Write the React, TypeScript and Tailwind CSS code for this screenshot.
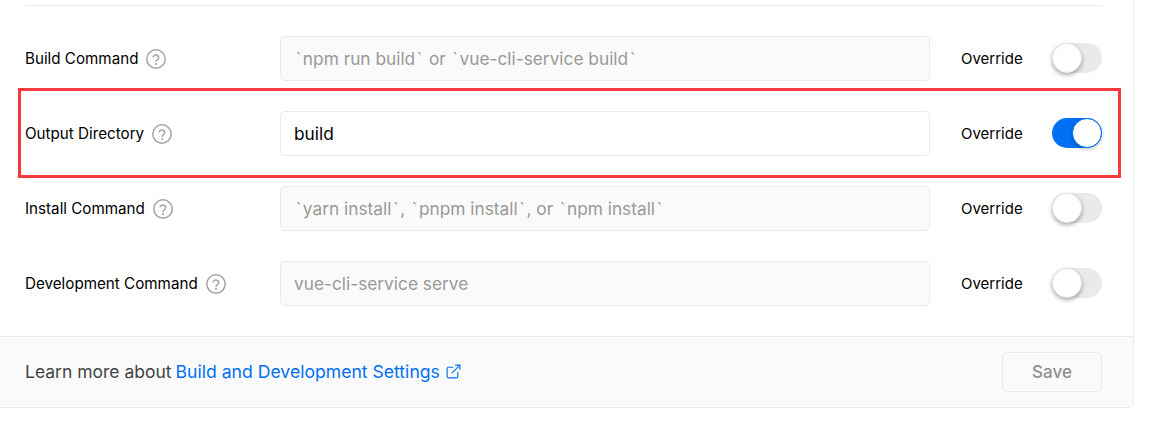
import { ExternalLink } from "lucide-react";

type Row = {
  label: string;
  value?: string;
  placeholder?: string;
  on?: boolean;
};

const rows: Row[] = [
  { label: "Build Command", placeholder: "`npm run build` or `vue-cli-service build`" },
  { label: "Output Directory", value: "build", on: true },
  { label: "Install Command", placeholder: "`yarn install`, `pnpm install`, or `npm install`" },
  { label: "Development Command", placeholder: "vue-cli-service serve" },
];

function HelpIcon() {
  return (
    <svg width="20" height="20" viewBox="0 0 20 20" fill="none" className="shrink-0">
      <circle cx="10" cy="10" r="9.2" stroke="#a3a3a3" strokeWidth="1.5" />
      <path
        d="M7.2 7.8a2.85 2.85 0 0 1 5.5.9c0 1.8-2.7 2.3-2.7 3.7"
        stroke="#a3a3a3"
        strokeWidth="1.5"
        strokeLinecap="round"
      />
      <circle cx="10" cy="15" r="1" fill="#a3a3a3" />
    </svg>
  );
}

function Toggle({ on }: { on?: boolean }) {
  return (
    <div
      className={`flex h-[30px] w-[50px] rounded-full ${
        on ? "justify-end bg-[#0070f3]" : "justify-start bg-[#eaeaea]"
      }`}
    >
      <div
        className={`h-[30px] w-[30px] rounded-full bg-white ${
          on
            ? "border border-[#0070f3] shadow-[0_2px_4px_rgba(0,0,0,0.2)]"
            : "border border-[#eaeaea] shadow-[0_2px_4px_rgba(0,0,0,0.35)]"
        }`}
      />
    </div>
  );
}

// backticks are wider in the reference font, pad them out
function Ticks({ text }: { text: string }) {
  return (
    <>
      {text.split(/(`)/).map((part, i) =>
        part === "`" ? (
          <span key={i} className="px-[1.65px]">
            `
          </span>
        ) : (
          part
        )
      )}
    </>
  );
}

export default function App() {
  return (
    <div className="relative h-[422px] w-[1149px] overflow-hidden bg-white font-['Inter',sans-serif]">
      <div className="w-[1134px] rounded-br-[5px] border-r border-b border-[#eaeaea]">
        <div className="pt-[5px] pr-[31px] pl-[25px]">
          <div className="h-px bg-[#eaeaea]" />
          <div className="flex flex-col gap-[30px] pt-[30px] pb-[30px]">
            {rows.map((row) => (
              <div key={row.label} className="flex h-[45px] items-center">
                <div className="flex w-[255px] items-center text-[15.2px] text-black">
                  <span className="pt-px">{row.label}</span>
                  <span className="mt-px ml-[8px]">
                    <HelpIcon />
                  </span>
                </div>
                <div
                  className={`flex h-[45px] w-[650px] items-center whitespace-pre rounded-[5px] border border-[#eaeaea] px-[13px] pt-px text-[17.3px] ${
                    row.value ? "bg-white text-black" : "bg-[#fafafa] text-[#999]"
                  }`}
                >
                  {row.value ?? <Ticks text={row.placeholder ?? ""} />}
                </div>
                <span className="ml-[31px] pt-px text-[15px] text-black">Override</span>
                <div className="mt-[-1px] ml-auto">
                  <Toggle on={row.on} />
                </div>
              </div>
            ))}
          </div>
        </div>
        <div className="flex h-[71px] items-center justify-between border-t border-[#eaeaea] bg-[#fafafa] pr-[31px] pl-[25px]">
          <p className="flex items-center text-[17.5px] text-[#444]">
            Learn more about
            <a className="ml-[4px] flex items-center text-[17.6px] text-[#0070f3]">
              Build and Development Settings
              <ExternalLink size={17} strokeWidth={1.6} className="ml-[5px]" />
            </a>
          </p>
          <button className="h-[40px] w-[100px] rounded-[5px] border border-[#eaeaea] bg-[#fafafa] pt-px text-[17px] font-medium text-[#8f8f8f]">
            Save
          </button>
        </div>
      </div>
      <div className="absolute top-[88px] left-[18px] h-[90px] w-[1103px] border-[3px] border-[#f43a3a]" />
    </div>
  );
}
